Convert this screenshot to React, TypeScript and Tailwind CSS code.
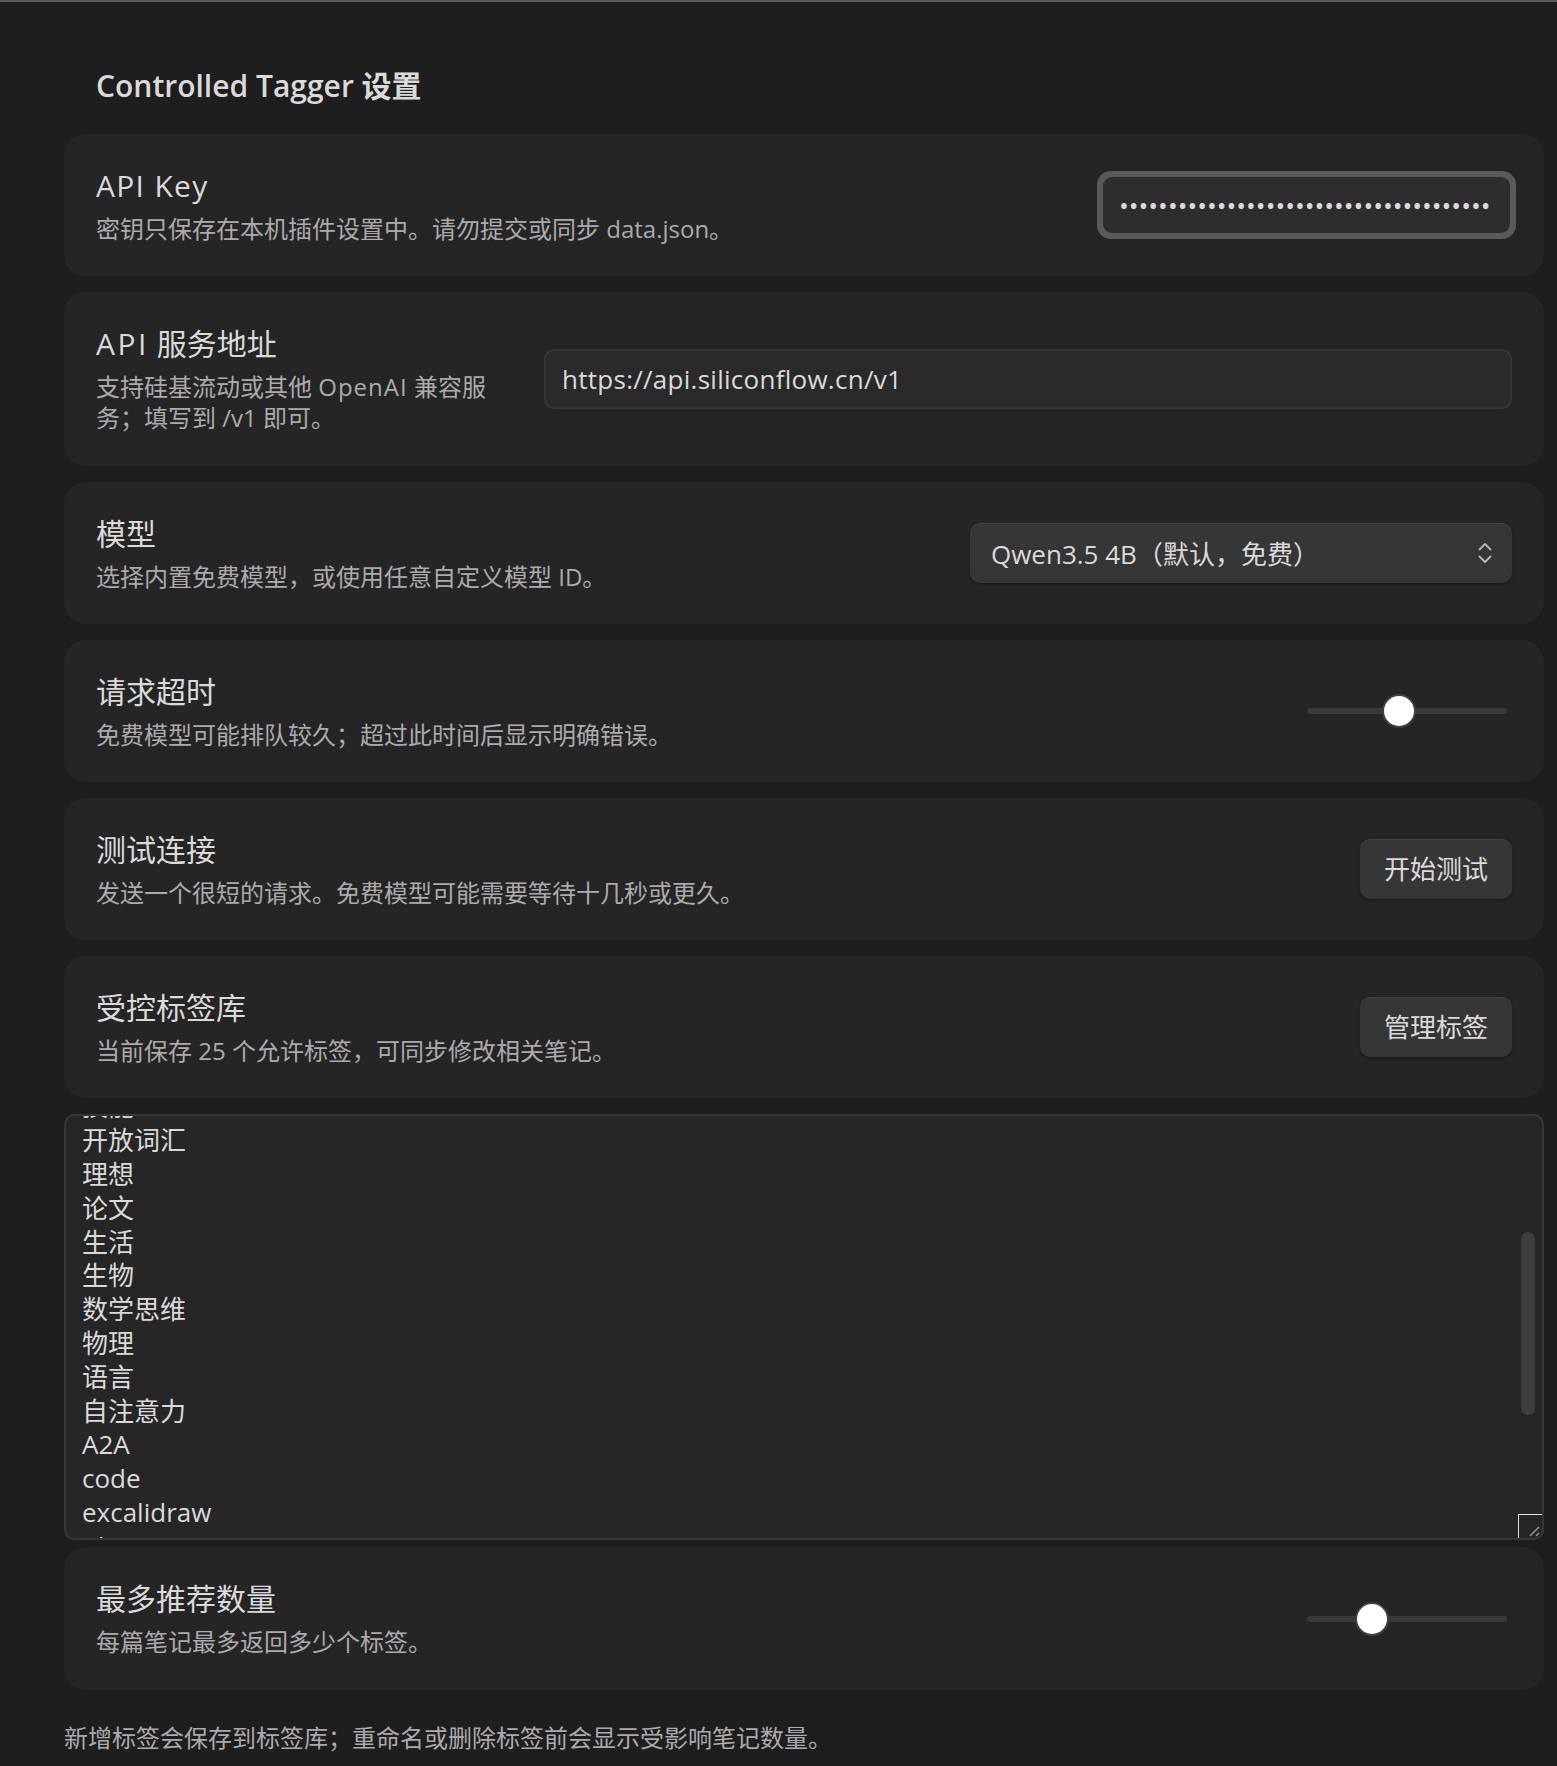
import { ReactNode } from "react";

const TAGS = ["技能", "开放词汇", "理想", "论文", "生活", "生物", "数学思维", "物理", "语言", "自注意力", "A2A", "code", "excalidraw", "idea"];

function Setting({ name, desc, descClass, children }: { name: ReactNode; desc: ReactNode; descClass?: string; children?: ReactNode }) {
  return (
    <div className="flex items-center justify-between rounded-[22px] bg-[#252525] pl-8 pr-8 py-8">
      <div className={descClass}>
        <div className="text-[30px] leading-[39px] text-[#dadada]">{name}</div>
        <div className="mt-2 text-[24px] leading-[31.2px] text-[#ababab]">{desc}</div>
      </div>
      {children}
    </div>
  );
}

function Slider({ left }: { left: string }) {
  return (
    <div className="relative mr-[5px] h-[6px] w-[200px] rounded-full bg-[#3a3a3a]">
      <div className={`absolute top-[-14px] h-[34px] w-[34px] rounded-full border-2 border-[#3f3f3f] bg-white ${left}`} />
    </div>
  );
}

function Button({ label }: { label: string }) {
  return (
    <button className="h-[60px] w-[152px] rounded-[10px] border-t border-[#444] bg-[#363636] text-[26px] text-[#dadada] shadow-[0_1px_3px_rgba(0,0,0,0.35)]">
      {label}
    </button>
  );
}

export default function App() {
  return (
    <div className="h-[1766px] w-full overflow-hidden border-t-2 border-[#5a5a5a] bg-[#1e1e1e] pl-16 pr-[13px] font-['Open_Sans','Noto_Sans_CJK_SC',sans-serif]">
      <h2 className="pl-8 pt-16 pb-[29px] text-[30px] font-semibold leading-[39px] text-[#dadada]">Controlled Tagger 设置</h2>

      <div className="flex flex-col gap-4">
        <Setting name={<span className="tracking-[1.3px]">API Key</span>} desc="密钥只保存在本机插件设置中。请勿提交或同步 data.json。">
          <div className="-mr-1 rounded-[14px] bg-[#5a5a5a] p-[6px]">
            <input
              type="password"
              readOnly
              value="sk-abcdefghijklmnopqrstuvwxyz012345678"
              className="block h-[56px] w-[407px] rounded-[9px] bg-[#2d2d2d] px-4 text-[26px] text-[#dadada] outline-none"
            />
          </div>
        </Setting>

        <Setting
          name={<><span className="tracking-[2.5px]">API</span> 服务地址</>}
          desc={
            <>
              <div>支持硅基流动或其他 <span className="tracking-[1px]">OpenAI</span> 兼容服</div>
              <div>务；填写到 /v1 即可。</div>
            </>
          }
          descClass="w-[400px] shrink-0"
        >
          <div className="ml-12 flex h-[60px] flex-1 items-center rounded-[10px] border-2 border-[#363636] bg-[#2a2a2a] px-4 pt-[2px] text-[26px] tracking-[0.27px] text-[#dadada]">
            https://api.siliconflow.cn/v1
          </div>
        </Setting>

        <Setting name="模型" desc="选择内置免费模型，或使用任意自定义模型 ID。">
          <div className="flex h-[60px] w-[542px] items-center justify-between rounded-[10px] border-t border-[#444] bg-[#363636] pl-[21px] pr-5 text-[26px] text-[#dadada] shadow-[0_1px_3px_rgba(0,0,0,0.35)]">
            <span className="pt-[2px]">Qwen3.5 4B（默认，免费）</span>
            <svg width="14" height="22" viewBox="0 0 14 22" fill="none" stroke="#b8b8b8" strokeWidth="1.8" strokeLinecap="round" strokeLinejoin="round">
              <path d="M1.5 7.5 7 2l5.5 5.5" />
              <path d="M1.5 14.5 7 20l5.5-5.5" />
            </svg>
          </div>
        </Setting>

        <Setting name="请求超时" desc="免费模型可能排队较久；超过此时间后显示明确错误。">
          <Slider left="left-[75px]" />
        </Setting>

        <Setting name="测试连接" desc="发送一个很短的请求。免费模型可能需要等待十几秒或更久。">
          <Button label="开始测试" />
        </Setting>

        <Setting name="受控标签库" desc="当前保存 25 个允许标签，可同步修改相关笔记。">
          <Button label="管理标签" />
        </Setting>
      </div>

      <div className="relative mt-4 h-[426px] overflow-hidden rounded-[10px] border-2 border-[#363636] bg-[#262626]">
        <div className="-mt-[26px] pl-4 text-[26px] leading-[33.8px] text-[#dadada]">
          {TAGS.map((tag) => (
            <div key={tag}>{tag}</div>
          ))}
        </div>
        <div className="absolute right-[7px] top-[116px] h-[183px] w-[14px] rounded-full bg-[#3f3f3f]" />
        <div className="absolute bottom-0 right-0 h-[24px] w-[24px] border-l border-t border-[#e0e0e0] bg-[#262626]">
          <svg width="22" height="22" viewBox="0 0 22 22" fill="none" stroke="#999" strokeWidth="1.5">
            <path d="M11 21 20 12" />
            <path d="M17 21 20 18" />
          </svg>
        </div>
      </div>

      <div className="mt-[7px]">
        <Setting name="最多推荐数量" desc="每篇笔记最多返回多少个标签。">
          <Slider left="left-[48px]" />
        </Setting>
      </div>

      <p className="mt-[32px] text-[24px] leading-[31.2px] text-[#ababab]">新增标签会保存到标签库；重命名或删除标签前会显示受影响笔记数量。</p>
    </div>
  );
}
